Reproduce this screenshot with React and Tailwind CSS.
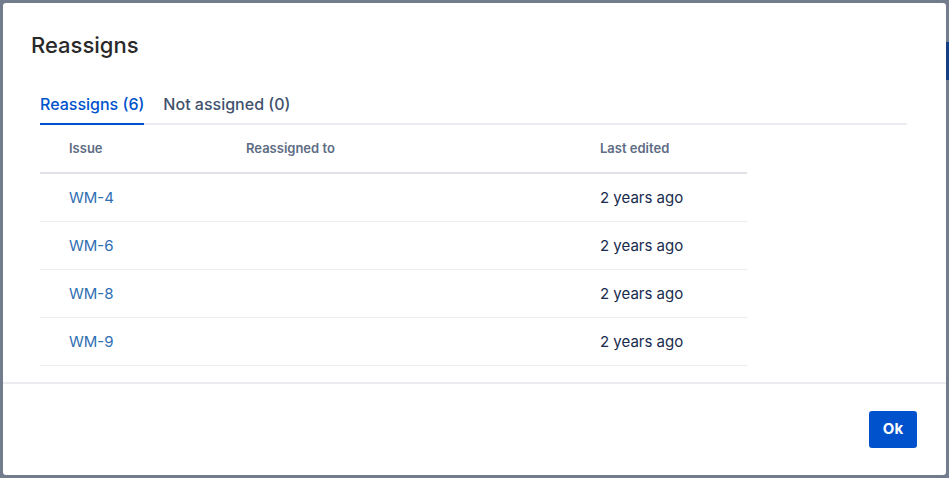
import React from 'react'

/**
 * Reassigns dialog
 * Modal listing reassigned issues, with tabs and a footer action
 */

const rows = [
  { key: 'WM-4', to: '', edited: '2 years ago' },
  { key: 'WM-6', to: '', edited: '2 years ago' },
  { key: 'WM-8', to: '', edited: '2 years ago' },
  { key: 'WM-9', to: '', edited: '2 years ago' },
]

const App = () => {
  return (
    <div
      className="flex h-[478px] w-[949px] bg-[#737c8c] pl-[3px] py-[3px]"
      style={{ fontFamily: 'Inter, "Noto Sans", sans-serif' }}
    >
      {/* Dialog */}
      <div className="flex w-[943px] flex-col rounded-[3px] bg-white">
        {/* Header */}
        <div className="px-[28px] pt-[29px]">
          <h1 className="text-[22px] leading-[26px] font-medium text-[#292929]">Reassigns</h1>
        </div>

        {/* Body */}
        <div className="flex-1 pl-[37px] pr-[39px] pt-[36px]">
          {/* Tabs */}
          <div className="flex gap-[19px] border-b-2 border-[#ebecf0]">
            <button className="-mb-[2px] border-b-2 border-[#0052cc] pb-[9px] text-[16px] leading-[20px] font-medium text-[#0052cc]">
              Reassigns (6)
            </button>
            <button className="-mb-[2px] border-b-2 border-transparent pb-[9px] text-[16px] leading-[20px] font-medium text-[#42526e]">
              Not assigned (0)
            </button>
          </div>

          {/* Table */}
          <div className="w-[707px]">
            <div className="grid h-[49px] grid-cols-[177px_354px_176px] items-center border-b-2 border-[#dfe1e6] text-[13px] font-semibold text-[#5e6c84]">
              <div className="pl-[29px]">Issue</div>
              <div className="pl-[29px]">Reassigned to</div>
              <div className="pl-[29px]">Last edited</div>
            </div>
            {rows.map((row) => (
              <div
                key={row.key}
                className="grid h-[48px] grid-cols-[177px_354px_176px] items-center border-b border-[#ebecf0] pt-[2px] text-[15px]"
              >
                <div className="pl-[29px]">
                  <a className="text-[#2f6db3]">{row.key}</a>
                </div>
                <div className="pl-[29px] text-[#172b4d]">{row.to}</div>
                <div className="pl-[29px] text-[#172b4d]">{row.edited}</div>
              </div>
            ))}
          </div>
        </div>

        {/* Footer */}
        <div className="flex h-[93px] items-center justify-end border-t-2 border-[#ebecf0] pr-[29px]">
          <button className="h-[37px] w-[48px] rounded-[3px] bg-[#0052cc] text-[15px] font-bold text-white">
            Ok
          </button>
        </div>
      </div>

      {/* Page edge behind the blanket */}
      <div className="w-[3px] pt-[39px]">
        <div className="h-[38px] bg-[#173f86]" />
      </div>
    </div>
  )
}

export default App
